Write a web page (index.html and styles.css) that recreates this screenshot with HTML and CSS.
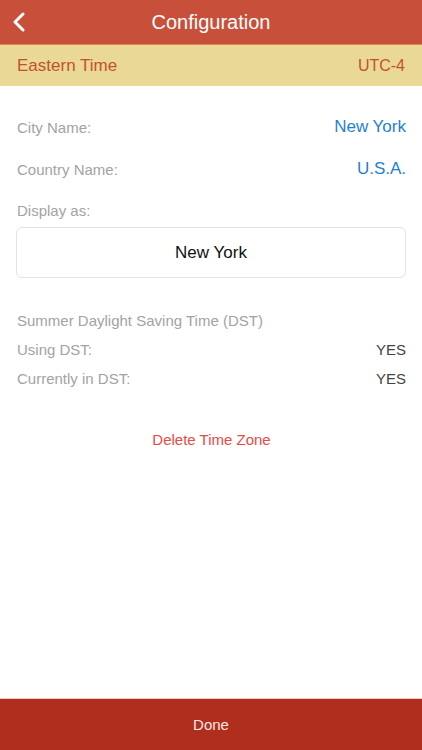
FILE: index.html
```html
<!DOCTYPE html>
<html lang="en">
<head>
  <meta charset="UTF-8" />
  <meta name="viewport" content="width=device-width, initial-scale=1.0" />
  <title>Configuration</title>
  <link rel="stylesheet" href="styles.css">
</head>
<body>
  <div class="screen">
    <header class="navbar">
      <a class="back" href="#">
        <svg width="14" height="20" viewBox="0 0 14 20">
          <path d="M11 2 L3 10 L11 18" fill="none" stroke="#fff" stroke-width="3" stroke-linecap="round" stroke-linejoin="round"/>
        </svg>
      </a>
      <h1>Configuration</h1>
    </header>

    <div class="zone">
      <span>Eastern Time</span>
      <span>UTC-4</span>
    </div>

    <main class="content">
      <div class="row">
        <span class="label">City Name:</span>
        <span class="link">New York</span>
      </div>
      <div class="row">
        <span class="label">Country Name:</span>
        <span class="link">U.S.A.</span>
      </div>
      <div class="label display-label">Display as:</div>
      <div class="display-box">New York</div>

      <div class="dst">
        <div class="label">Summer Daylight Saving Time (DST)</div>
        <div class="dst-row">
          <span class="label">Using DST:</span>
          <span class="value">YES</span>
        </div>
        <div class="dst-row">
          <span class="label">Currently in DST:</span>
          <span class="value">YES</span>
        </div>
      </div>

      <div class="delete">Delete Time Zone</div>
    </main>

    <footer class="done">Done</footer>
  </div>
</body>
</html>
```

FILE: styles.css
```css
* {
  box-sizing: border-box;
}
body {
  margin: 0;
  font-family: "Liberation Sans", Arial, sans-serif;
  background: #fff;
}
.screen {
  height: 750px;
  display: flex;
  flex-direction: column;
}
.navbar {
  height: 44px;
  background: #c8503a;
  display: flex;
  align-items: center;
  justify-content: center;
  position: relative;
}
.back {
  position: absolute;
  left: 12px;
  top: 12px;
  display: block;
  height: 20px;
}
.navbar h1 {
  margin: 0;
  color: #fff;
  font-size: 20px;
  font-weight: normal;
}
.zone {
  height: 42px;
  background: #e9d896;
  color: #c4512e;
  display: flex;
  justify-content: space-between;
  align-items: center;
  padding: 0 17px;
  font-size: 17px;
  border-top: 1px solid #d9884f;
}
.zone span:last-child {
  font-size: 16px;
}
.content {
  flex: 1;
  padding: 0 16px 0 17px;
}
.label {
  color: #a3a3a3;
  font-size: 15px;
}
.row {
  display: flex;
  justify-content: space-between;
  align-items: center;
  height: 42px;
}
.row:first-child {
  margin-top: 20px;
}
.link {
  color: #1f7fd6;
  font-size: 17px;
}
.display-label {
  margin-top: 12px;
  height: 20px;
}
.display-box {
  margin: 5px 0 0 -1px;
  height: 51px;
  border: 1px solid #e3e3e3;
  border-radius: 6px;
  display: flex;
  align-items: center;
  justify-content: center;
  font-size: 17px;
  color: #111;
}
.dst {
  margin-top: 28px;
}
.dst .label {
  line-height: 29px;
}
.dst-row {
  display: flex;
  justify-content: space-between;
}
.value {
  color: #444;
  font-size: 15px;
  line-height: 29px;
}
.delete {
  margin-top: 38px;
  text-align: center;
  color: #e84a46;
  font-size: 15px;
}
.done {
  height: 52px;
  background: #b02e1e;
  border-top: 1px solid #f0c8c0;
  color: #fbe6e2;
  font-size: 15px;
  display: flex;
  align-items: center;
  justify-content: center;
}
```
